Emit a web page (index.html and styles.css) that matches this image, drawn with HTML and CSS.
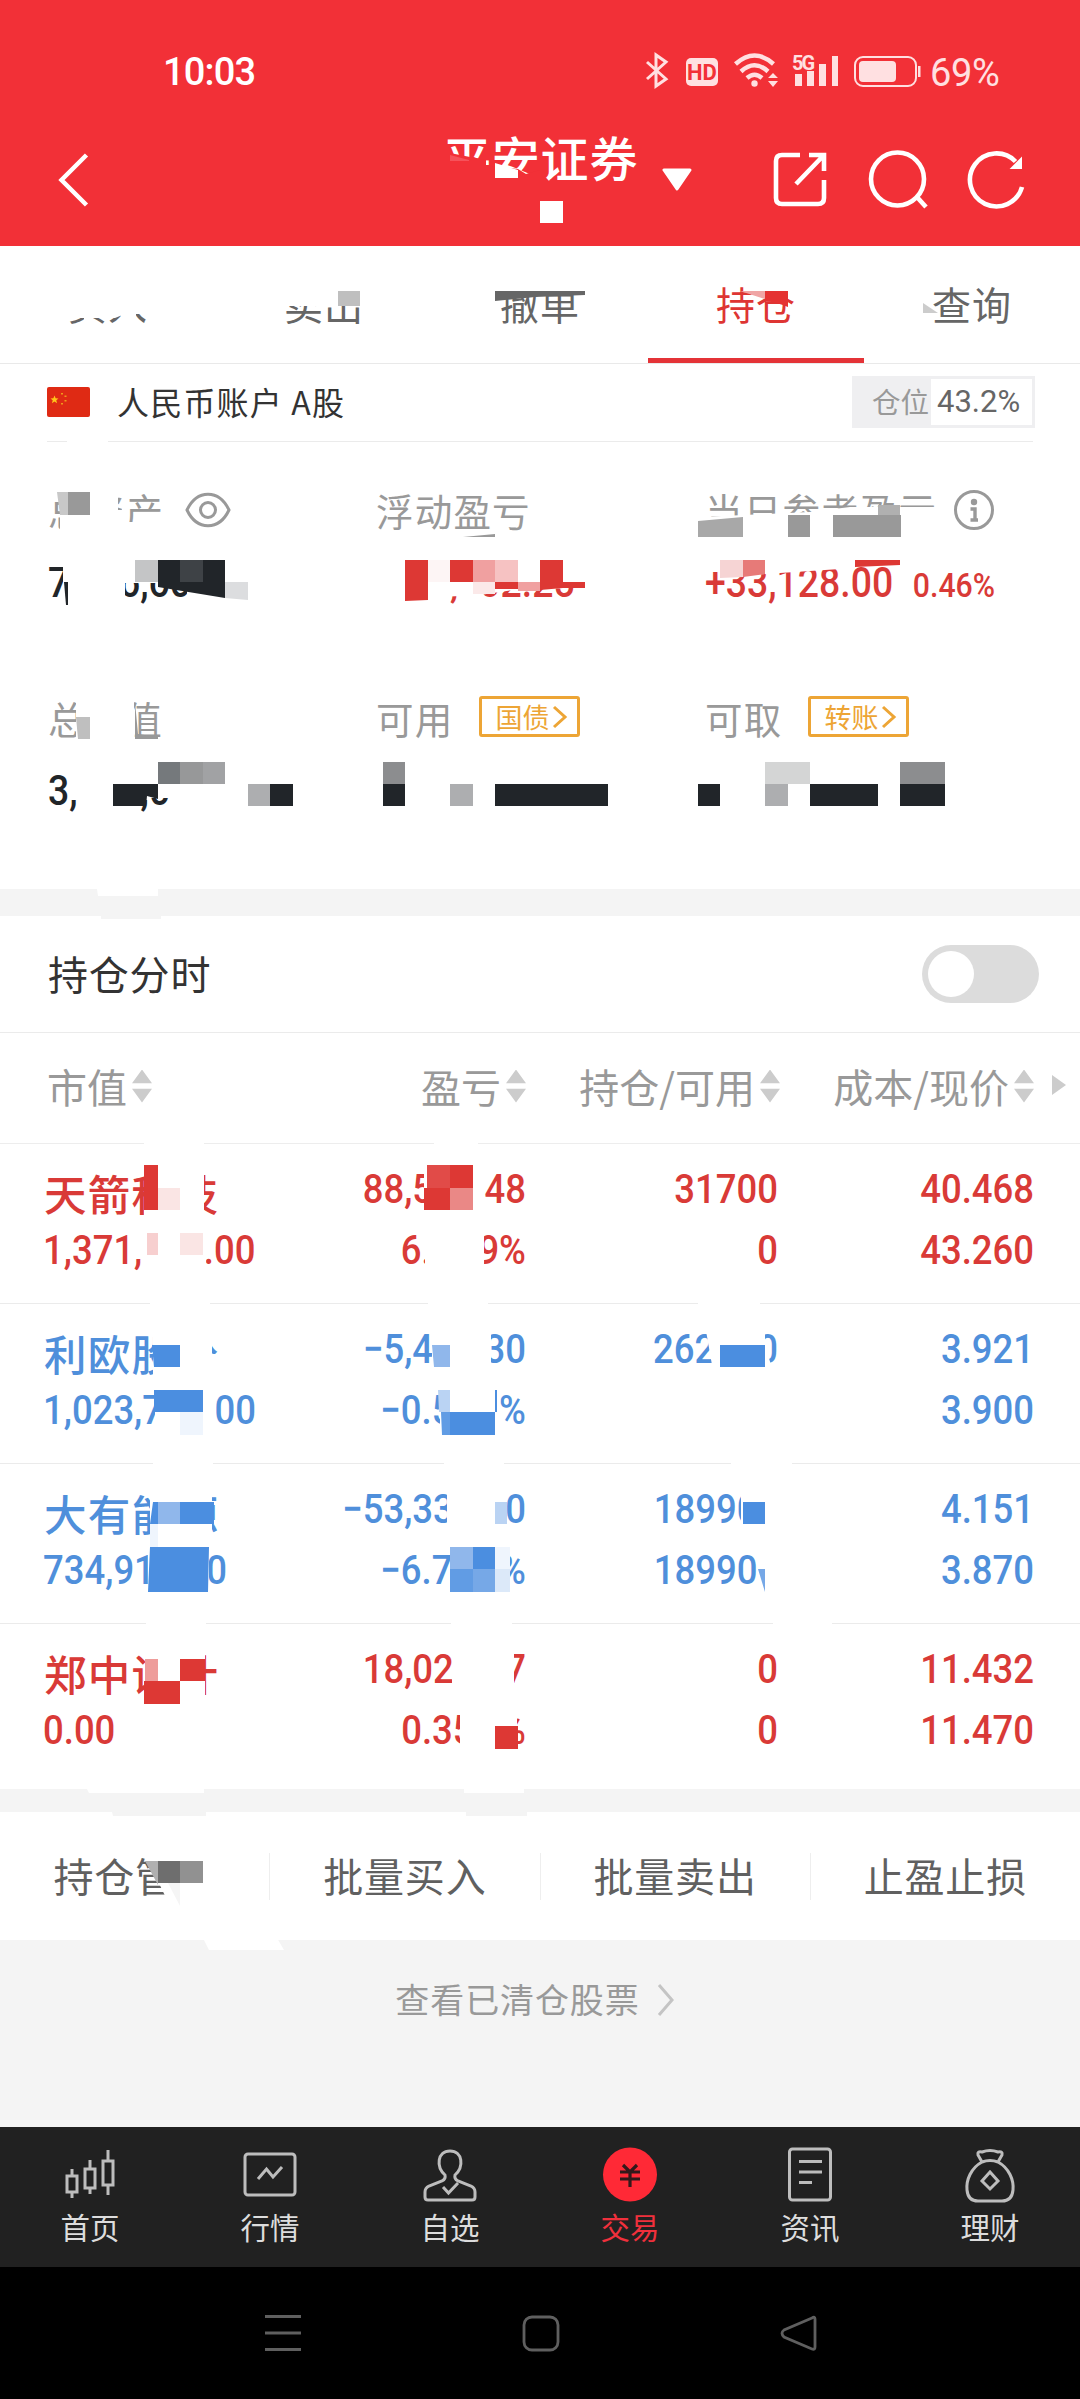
FILE: index.html
```html
<!DOCTYPE html>
<html lang="zh-CN">
<head>
    <meta charset="utf-8">
    <meta name="viewport" content="width=device-width, initial-scale=1.0">
    <link rel="stylesheet" href="styles.css">
    <title>持仓</title>
</head>

<body>
    <div class="header">
        <div class="status">
            <span class="time">10:03</span>
            <svg class="statusIcons" width="284" height="44" viewBox="640 48 284 44">
                <path d="M647 62 L666 79 L656 86 V55 L666 62 L647 79" fill="none" stroke="#ffe0e1" stroke-width="3" />
                <rect x="686" y="58" width="32" height="28" rx="5" fill="#ffe0e1" />
                <text x="702" y="80" text-anchor="middle" class="hd">HD</text>
                <g fill="none" stroke="#ffe0e1" stroke-width="4.500">
                    <path d="M735.500 64 Q754.500 47 773.500 64" />
                    <path d="M741 71.500 Q754.500 59 768 71.500" />
                    <path d="M747 78 Q754.500 71.500 762 78" />
                </g>
                <circle cx="754.500" cy="83.500" r="3.200" fill="#ffe0e1" />
                <path d="M773 73 l5 5 h-10z M768 81 h10 l-5 6z" fill="#ffe0e1" />
                <text x="792" y="69.500" class="net">5G</text>
                <path d="M795 74h7v12h-7z M807 71h7v15h-7z M819 64h7v22h-7z M832 56h6v30h-6z" fill="#ffe0e1" />
                <rect x="855" y="57" width="61" height="29" rx="8" fill="none" stroke="#ffe0e1" stroke-width="2" />
                <rect x="859" y="61" width="37" height="21" rx="4" fill="#ffe0e1" />
                <rect x="918" y="66" width="2.500" height="11" fill="#ffe0e1" />
            </svg>
            <span class="battery">69%</span>
        </div>
        <div class="titleBar">
            <svg class="back" width="40" height="60" viewBox="0 0 40 60"><path d="M31.500 5 L6.500 30 L31.500 55" fill="none" stroke="#fff" stroke-width="4.500" /></svg>
            <h1>平安证券</h1>
            <svg class="caret" width="30" height="24" viewBox="0 0 30 24"><path d="M2 2 H28 L15 21z" fill="#fff" stroke="#fff" stroke-width="3" stroke-linejoin="round" /></svg>
            <svg class="tools" width="256" height="64" viewBox="770 148 256 64" fill="none" stroke="#fff" stroke-width="4.600">
                <path d="M800 155 H782 Q776 155 776 161 V198 Q776 204 782 204 H818 Q824 204 824 198 V180" />
                <path d="M809 155 H824 V171 M823 156 L796 184" />
                <circle cx="897.500" cy="179" r="26.500" />
                <path d="M916 196 L926 207" />
                <path d="M1015.500 161.500 A26.500 26.500 0 1 0 1022 187" />
                <path d="M1021 159 V168 H1012z" fill="#fff" stroke-width="2" />
            </svg>
        </div>
    </div>

    <div class="tabs">
        <a>买入</a>
        <a>卖出</a>
        <a>撤单</a>
        <a class="active">持仓</a>
        <a>查询</a>
    </div>

    <div class="account">
        <svg width="43" height="30" viewBox="0 0 43 30">
            <rect width="43" height="30" rx="2" fill="#df2a14" />
            <path d="M7.500 8.500l1.100 2.700 2.900.2-2.200 1.900.7 2.900-2.500-1.600-2.500 1.600.7-2.900-2.200-1.900 2.900-.2z" fill="#ffc61a" />
            <path d="M14 6h2v1.500h-2z M17.500 8.500h2v1.500h-2z M17.500 13h2v1.500h-2z M14 16h2v1.500h-2z" fill="#f09a1a" />
        </svg>
        <span class="accountName">人民币账户 A股</span>
        <div class="position"><span>仓位</span><b>43.2%</b></div>
    </div>

    <div class="summary">
        <div class="item">
            <div class="label">总资产
                <svg class="eye" width="46" height="36" viewBox="0 0 46 36" fill="none" stroke="#999" stroke-width="3"><path d="M2 18 C12 -3 34 -3 44 18 C34 39 12 39 2 18z" /><circle cx="23" cy="18" r="7.500" /></svg>
            </div>
            <div class="value">7<i class="gap gap-2c"></i>6,60</div>
        </div>
        <div class="item">
            <div class="label">浮动盈亏</div>
            <div class="value red profit">,<i class="gap gap-1"></i>02.25</div>
        </div>
        <div class="item">
            <div class="label">当日参考盈亏
                <svg class="info" width="40" height="42" viewBox="0 0 40 42" fill="none" stroke="#999" stroke-width="3"><circle cx="20" cy="21" r="18.500" /><circle cx="20" cy="13" r="3.200" fill="#999" stroke="none" /><path d="M16.500 20 H21 V31 M16.500 31 H24" stroke-width="3.400" /></svg>
            </div>
            <div class="value red">+33,128.00<small>0.46%</small></div>
        </div>
        <div class="item">
            <div class="label">总<i class="gap gap-w"></i>值</div>
            <div class="value">3,<i class="gap gap-3"></i>,0</div>
        </div>
        <div class="item">
            <div class="label">可用
                <span class="tag">国债<svg width="16" height="24" viewBox="0 0 16 24"><path d="M2 2 L13 12 L2 22" fill="none" stroke="#eda535" stroke-width="3" /></svg></span>
            </div>
        </div>
        <div class="item">
            <div class="label">可取
                <span class="tag">转账<svg width="16" height="24" viewBox="0 0 16 24"><path d="M2 2 L13 12 L2 22" fill="none" stroke="#eda535" stroke-width="3" /></svg></span>
            </div>
        </div>
    </div>

    <div class="band"></div>

    <div class="switchRow">
        <span>持仓分时</span>
        <div class="switch"><i></i></div>
    </div>

    <div class="tableHead">
        <div class="c1"><span>市值</span><i class="sort"></i></div>
        <div class="c2"><span>盈亏</span><i class="sort"></i></div>
        <div class="c3"><span>持仓/可用</span><i class="sort"></i></div>
        <div class="c4"><span>成本/现价</span><i class="sort"></i></div>
        <i class="more"></i>
    </div>

    <div class="stock red">
        <div class="c1"><b>天箭科技</b><span>1,371,<i class="gap gap-3"></i>.00</span></div>
        <div class="c2"><span>88,5<i class="gap gap-2d"></i>48</span><span>6.<i class="gap gap-2p"></i>9%</span></div>
        <div class="c3"><span>31700</span><span>0</span></div>
        <div class="c4"><span>40.468</span><span>43.260</span></div>
    </div>
    <div class="stock blue">
        <div class="c1"><b>利欧股份</b><span>1,023,7<i class="gap gap-2d"></i>00</span></div>
        <div class="c2"><span>−5,4<i class="gap gap-2d"></i>30</span><span>−0.5<i class="gap gap-2p"></i>%</span></div>
        <div class="c3"><span>262<i class="gap gap-2"></i>0</span></div>
        <div class="c4"><span>3.921</span><span>3.900</span></div>
    </div>
    <div class="stock blue">
        <div class="c1"><b>大有能源</b><span>734,91<i class="gap gap-2d"></i>0</span></div>
        <div class="c2"><span>−53,33<i class="gap gap-2d"></i>0</span><span>−6.7<i class="gap gap-2p"></i>%</span></div>
        <div class="c3"><span>18990<i class="gap gap-1"></i></span><span>18990<i class="gap gap-1"></i></span></div>
        <div class="c4"><span>4.151</span><span>3.870</span></div>
    </div>
    <div class="stock red last">
        <div class="c1"><b>郑中设计</b><span>0.00</span></div>
        <div class="c2"><span>18,02<i class="gap gap-2d"></i>7</span><span>0.35<i class="gap gap-1p"></i>%</span></div>
        <div class="c3"><span>0</span><span>0</span></div>
        <div class="c4"><span>11.432</span><span>11.470</span></div>
    </div>

    <div class="band thin"></div>

    <div class="actions">
        <a>持仓管<i class="gap gap-w"></i></a>
        <a>批量买入</a>
        <a>批量卖出</a>
        <a>止盈止损</a>
    </div>

    <div class="cleared">
        查看已清仓股票
        <svg width="18" height="34" viewBox="0 0 18 34"><path d="M2 2 L15 17 L2 32" fill="none" stroke="#c4c4c4" stroke-width="3" /></svg>
    </div>

    <div class="menu">
        <a>
            <svg viewBox="0 0 60 60"><path d="M7 32h10v16H7z M12 25v7 M12 48v6 M25 25h10v19H25z M30 16v9 M30 44v6 M43 17h10v24H43z M48 6v11 M48 41v10" /></svg>
            <span>首页</span>
        </a>
        <a>
            <svg viewBox="0 0 60 60"><rect x="5" y="10" width="50" height="41" rx="3" /><path d="M18 35 L26.500 25 L33 33 L42 23" /></svg>
            <span>行情</span>
        </a>
        <a>
            <svg viewBox="0 0 60 60"><path d="M25 31 C16 23 17 7 30 7 C43 7 44 23 35 31 Q34 35 38 37 L51 42 Q55 44 55 48 V53 Q55 56 52 56 H8 Q5 56 5 53 V48 Q5 44 9 42 L22 37 Q26 35 25 31z M23 43 L28.500 49 L38 39" /></svg>
            <span>自选</span>
        </a>
        <a class="active">
            <svg viewBox="0 0 60 60"><circle cx="30" cy="30.500" r="27" fill="#ff2936" stroke="none" /><path d="M23 21 L30 28 L37 21 M20 28 H40 M20 35 H40 M30 28 V43" stroke="#33191b" stroke-width="3.200" /></svg>
            <span>交易</span>
        </a>
        <a>
            <svg viewBox="0 0 60 60"><rect x="9.500" y="5" width="41" height="51" rx="3" /><path d="M19 17.500 H42 M19 28 H42 M19 38.500 H32" /></svg>
            <span>资讯</span>
        </a>
        <a>
            <svg viewBox="0 0 60 60"><path d="M22 18 L18 11 Q17 7 22 8 Q30 5 38 8 Q43 7 42 11 L38 18 C49 24 54 36 53 46 Q52 57 42 57 H18 Q8 57 7 46 C6 36 11 24 22 18 Q30 15 38 18 M30 28 L38 37 L30 45 L22 37z" /></svg>
            <span>理财</span>
        </a>
    </div>

    <div class="navBar">
        <svg width="1080" height="132" viewBox="0 0 1080 132" fill="none" stroke="#5f5f5f" stroke-width="2.800">
            <path d="M265 49.500 H301 M265 66 H301 M265 82.500 H301" />
            <rect x="524" y="50" width="34" height="33" rx="8" />
            <path d="M812 51 L784 63 Q780 66 784 70 L812 82 Q815 83 815 80 V52 Q815 49 812 51z" />
        </svg>
    </div>

    <!-- mosaic that hides the private figures -->
    <svg class="mosaic" width="1080" height="2399" viewBox="0 0 1080 2399">
        <!-- title -->
        <g fill="#f23037">
            <path d="M444 153 L450 153 L470 157 L486 160 V190 H444z" />
            <path d="M492 166 L518 169 L526 174 L540 170 V186 H492z" />
        </g>
        <path d="M450 155 L469 160 V161 H450z" fill="#f6525a" />
        <g fill="#fff">
            <path d="M495 163 L518 170 V178 H495z M540 201h23v22h-23z" />
            <!-- tabs -->
            <path d="M60 270 H160 V314 H125 L115 318 H60z M84 310h9v16h-9z M121 312h15v16h-15z" />
            <path d="M280 270h90v36h-90z M490 270h98v21h-98z M757 270h40v21h-40z" />
        </g>
        <path d="M338 291h22v15h-22z" fill="#bfbfbf" />
        <path d="M495 291 H585 V295 L535 297 L495 301z" fill="#666" />
        <path d="M740 291 H765 V299z" fill="#f0a5a5" />
        <path d="M765 291 H788 V307 Q776 302 765 301z" fill="#e53232" />
        <path d="M923 303 L938 313 H923z" fill="#ccc" />

        <g fill="#fff">
            <path d="M67 438h41v6h-41z" />
            <!-- summary labels -->
            <path d="M46 488h22v10h-22z M60 488h58v45h-58z M122 488h7v45h-7z M122 522h45v12h-45z M118 510h10v20h-10z" />
            <path d="M698 517 L745 515 L788 513 L810 512 L850 507 L940 507 V537 H698z" />
            <path d="M76 696h58v45h-58z" />
            <!-- summary values -->
            <path d="M63 558h62v50h-62z M125 558h125v25h-125z M187 588h70v20h-70z" />
            <path d="M440 555 H590 V587 L520 589 L480 595 L440 597z" />
            <path d="M720 555 H855 V568 L810 571 L765 574 L720 578z" />
            <path d="M135 766h50v32h-50z M155 762h40v36h-40z" />
        </g>
        <path d="M57 492 H68 V515 H60z" fill="#c8c8c8" />
        <path d="M68 492h22v23h-22z" fill="#999" />
        <path d="M463 537 L495 534 V537z" fill="#999" />
        <path d="M698 521 L743 517 V537 H698z" fill="#a8a8a8" />
        <path d="M788 515h22v22h-22z M833 515h68v22h-68z" fill="#999" />
        <path d="M878 505h22v10h-22z" fill="#b0b0b0" />
        <path d="M64 582 H68 V605 H66z" fill="#212529" />
        <path d="M135 560h23v22h-23z" fill="#c4c5c6" />
        <path d="M158 560 H225 V598 L158 587z" fill="#212529" />
        <path d="M180 560h23v22h-23z" fill="#3e4246" />
        <path d="M225 582 H248 V600 L225 598z" fill="#dcdddf" />
        <path d="M405 560 H428 V600 L405 601z M450 560h23v22h-23z M495 582h23v7h-23z M540 560h23v22h22v6h-22l-23 2z" fill="#dd3834" />
        <path d="M428 560h22v22h-22z" fill="#fdf5f5" />
        <path d="M473 560h22v22h-22z M518 582h22v9h-22z" fill="#f0a0a0" />
        <path d="M495 560h23v22h-23z" fill="#f6c2c2" />
        <path d="M473 582h22v12h-22z" fill="#fbe9e9" />
        <path d="M720 560 H743 V577 L720 578z" fill="#f6d4d4" />
        <path d="M743 560 H765 V574 L743 577z" fill="#e77a78" />
        <path d="M855 560 H900 V565 L855 567z" fill="#dd3834" />
        <path d="M76 717 H90 V739 H78z" fill="#bfbfbf" />
        <path d="M135 702 L138 734 L158 737 V739 H135z" fill="#999" />
        <path d="M158 762h22v22h-22z" fill="#75797c" />
        <path d="M180 762h23v22h-23z" fill="#979899" />
        <path d="M203 762h22v22h-22z" fill="#a1a2a4" />
        <path d="M113 784 H158 V799 L147 796 L146 806 H113z M270 784h23v22h-23z M383 784h22v22h-22z M495 784h113v22h-113z M698 784h22v22h-22z M810 784h68v22h-68z M900 784h45v22h-45z" fill="#212529" />
        <path d="M248 784h22v22h-22z M450 784h23v22h-23z M765 784h23v22h-23z" fill="#adaeb0" />
        <path d="M383 762h22v22h-22z M900 762h45v22h-45z" fill="#8c8d8f" />
        <path d="M765 762h45v22h-45z" fill="#d4d5d5" />

        <!-- separators cut by the mosaic -->
        <path d="M97 889 H158 V896 H98z" fill="#fff" />
        <path d="M101 916h60v3h-60z" fill="#f4f4f4" />
        <g fill="#fff">
            <path d="M144 1141h60v5h-60z M434 1141h44v5h-44z" />
            <path d="M150 1301h60v5h-60z M428 1301h60v5h-60z M698 1301h62v5h-62z" />
            <path d="M153 1461h60v5h-60z M444 1461h60v5h-60z M731 1461h61v5h-61z" />
            <path d="M146 1622h60v5h-60z M451 1622h61v5h-61z M773 1622h59v5h-59z" />
            <!-- row 1 -->
            <path d="M144 1165h60v60h-60z M148 1230h58v42h-58z M424 1165h59v50h-59z M425 1228h59v45h-59z" />
            <!-- row 2 -->
            <path d="M153 1325h59v56h-59z M212 1325h8v20h-8z M212 1354h8v26h-8z M155 1388h61v47h-61z" />
            <path d="M432 1325h59v50h-59z M440 1388h55v47h-55z M705 1325 L712 1365 H771 L765 1345 V1325z" />
            <!-- row 3 -->
            <path d="M150 1487h62v55h-62z M148 1547h61v45h-61z M447 1487h59v45h-59z M450 1547h60v45h-60z M741 1487h26v45h-26z" />
            <!-- row 4 -->
            <path d="M145 1648h60v56h-60z M452 1648h62v45h-62z M460 1708h57v45h-57z" />
        </g>
        <g fill="#dd3834">
            <path d="M144 1165h14v45h-14z M424 1188h26v22h-26z M450 1165h23v23h-23z" />
            <path d="M180 1659h25v22h-25z M144 1681h36v23h-36z M495 1726h23v23h-23z" />
        </g>
        <path d="M158 1188h22v22h-22z M180 1233h23v22h-23z" fill="#fae5e4" />
        <path d="M147 1233h11v22h-11z" fill="#f7cfcf" />
        <path d="M427 1165h23v23h-23z" fill="#e14b48" />
        <path d="M450 1188h23v22h-23z" fill="#ea8886" />
        <path d="M145 1659h13v22h-13z" fill="#ee9c9a" />
        <g fill="#4b8ee0">
            <path d="M152 1345 H180 V1367 H154z M154 1390h49v22h-49z M450 1412h45v23h-45z M495 1390h2v22h-2z M720 1345h45v22h-45z" />
            <path d="M153 1502 H214 V1524 H150z M150 1547 H209 L208 1592 H148z M473 1547h22v22h-22z M743 1502h22v22h-22z" />
        </g>
        <path d="M432 1345 H450 V1367 H434z M158 1502h22v22h-22z M450 1547h23v22h-23z" fill="#90b7eb" />
        <path d="M438 1390h12v22h-11z M495 1502h12v22h-12z" fill="#bad3f3" />
        <path d="M441 1412h9v23h-8z M450 1569h23v23h-23z" fill="#619ce4" />
        <path d="M473 1569h22v23h-22z M758 1569h7v23z" fill="#76a8e7" />
        <path d="M180 1412h23v23h-23z M150 1524h8v23h-8z M495 1547h15v22h-15z" fill="#eff5fd" />
        <path d="M495 1569h15v23h-15z" fill="#dce9f9" />

        <!-- bottom buttons -->
        <path d="M87 1789 H204 V1793 H89z M464 1789h60v4h-60z" fill="#fff" />
        <path d="M112 1812h94v4h-93z M466 1812h61v4h-61z" fill="#f4f4f4" />
        <path d="M144 1852 L168 1902 H215 V1852z" fill="#fff" />
        <path d="M145 1861 H158 V1885z" fill="#b0b0b0" />
        <path d="M158 1861h22v22h-22z" fill="#6e6e6e" />
        <path d="M180 1861h23v22h-23z" fill="#919191" />
        <path d="M168 1883 H180 V1906z" fill="#f5f5f5" />
        <path d="M203 1938 H277 L284 1950 H209z" fill="#fff" />
    </svg>
</body>
</html>
```
FILE: styles.css
```css
* {
    box-sizing: border-box;
}

html {
    font-family: "Noto Sans CJK SC", sans-serif;
}

body {
    position: relative;
    width: 1080px;
    height: 2399px;
    margin: 0;
    overflow: hidden;
    background-color: #ffffff;
}

i {
    font-style: normal;
}

svg {
    display: block;
}

.red {
    color: #d93a37;
}

.blue {
    color: #4f8fdb;
}

/* blanks that are left in the hidden figures */
.gap {
    display: inline-block;
}

.gap-1 {
    width: 0.5615em;
}

.gap-1p {
    width: 0.7em;
}

.gap-2 {
    width: 1.15em;
}

.gap-2p {
    width: 1.28em;
}

.gap-2c {
    width: 1.33em;
}

.gap-2d {
    width: 1.41em;
}

.gap-3 {
    width: 1.6845em;
}

.gap-w {
    width: 1em;
}

.header {
    height: 246px;
    background-color: #f23037;
    color: #ffffff;
}

.status {
    display: flex;
    height: 92px;
    padding: 48px 0 0 163px;
    font-family: Roboto, sans-serif;
    line-height: 48px;
}

.time {
    width: 477px;
    font-size: 38px;
    font-weight: 500;
    letter-spacing: -0.8px;
}

.battery {
    margin-left: 6px;
    font-size: 38px;
    line-height: 50px;
    letter-spacing: -0.3px;
    color: #ffe0e1;
}

.hd {
    font: 700 22px Roboto, sans-serif;
    fill: #f23037;
}

.net {
    font: 700 20px Roboto, sans-serif;
    letter-spacing: -2px;
    fill: #ffe0e1;
}

.titleBar {
    display: flex;
    align-items: flex-start;
    height: 154px;
    padding-left: 55px;
}

.back {
    margin-top: 58px;
}

.titleBar h1 {
    width: 202px;
    margin: 40px 0 0 348px;
    font-size: 48px;
    font-weight: 500;
    line-height: 48px;
    letter-spacing: 0.8px;
    white-space: nowrap;
}

.caret {
    margin: 76px 0 0 17px;
}

.tools {
    margin: 56px 0 0 78px;
}

.tabs {
    display: flex;
    height: 118px;
    border-bottom: 1px solid #e9e9e9;
}

.tabs a {
    flex: 1;
    border-bottom: 5px solid transparent;
    font-size: 39px;
    line-height: 114px;
    letter-spacing: 1px;
    text-align: center;
    color: #666666;
}

.tabs a.active {
    border-color: #e43337;
    color: #de3533;
}

.account {
    display: flex;
    height: 78px;
    margin: 0 47px;
    border-bottom: 1px solid #ebebeb;
}

.account > svg {
    margin-top: 23px;
}

.accountName {
    flex: 1;
    margin-left: 27px;
    font-size: 32px;
    line-height: 75px;
    letter-spacing: 1.2px;
    color: #333333;
}

.position {
    display: flex;
    width: 183px;
    height: 52px;
    margin: 12px -2px 0 0;
    padding: 3px;
    background-color: #efeff1;
    line-height: 45px;
}

.position span {
    width: 76px;
    padding-left: 17px;
    font-size: 28.5px;
    line-height: 43px;
    color: #999999;
}

.position b {
    flex: 1;
    padding-left: 6px;
    background-color: #ffffff;
    font-family: Roboto, sans-serif;
    font-size: 31px;
    font-weight: 400;
    color: #666666;
}

.summary {
    display: grid;
    grid-template-columns: 328px 329px 375px;
    grid-template-rows: 208px 239px;
    padding-left: 48px;
}

.label {
    display: flex;
    align-items: center;
    height: 56px;
    margin-top: 39px;
    font-size: 37.5px;
    letter-spacing: 1.2px;
    white-space: nowrap;
    color: #999999;
}

.eye {
    margin: 2px 0 0 21px;
}

.info {
    margin: 2px 0 0 17px;
}

.value {
    display: inline-block;
    margin-top: 22px;
    font-family: Roboto, sans-serif;
    font-size: 42px;
    font-weight: 500;
    line-height: 48px;
    white-space: nowrap;
    transform: scaleX(0.89);
    transform-origin: left;
    color: #212529;
}

.value.red {
    color: #d93a37;
}

.profit {
    margin-left: 74px;
}

.value small {
    margin-left: 22px;
    font-size: 34px;
}

.tag {
    display: flex;
    align-items: center;
    height: 41px;
    margin: 0 0 1px 26px;
    padding: 0 9px 0 13px;
    border: 3px solid #eda535;
    border-radius: 3px;
    font-size: 27px;
    letter-spacing: 0;
    color: #eda535;
}

.tag svg {
    margin-left: 3px;
}

.band {
    height: 27px;
    background-color: #f4f4f4;
}

.thin {
    height: 23px;
}

.switchRow {
    display: flex;
    justify-content: space-between;
    height: 117px;
    padding: 29px 41px 0 48px;
    border-bottom: 1px solid #ebebeb;
    font-size: 40px;
    line-height: 57px;
    letter-spacing: 0.8px;
    color: #333333;
}

.switch {
    width: 117px;
    height: 58px;
    padding: 6px;
    border-radius: 29px;
    background-color: #dcdcdc;
}

.switch i {
    display: block;
    width: 46px;
    height: 46px;
    border-radius: 50%;
    background-color: #ffffff;
}

.tableHead {
    display: flex;
    height: 111px;
    border-bottom: 1px solid #ededed;
    font-size: 40px;
    line-height: 108px;
    color: #999999;
}

.tableHead div {
    display: flex;
    align-items: center;
}

.tableHead span {
    margin-top: -5px;
}

.c1 {
    width: 300px;
    padding-left: 47px;
}

.c2 {
    width: 226px;
}

.c3 {
    width: 254px;
}

.c4 {
    width: 254px;
}

.tableHead .c2,
.tableHead .c3,
.tableHead .c4 {
    justify-content: flex-end;
}

.sort {
    width: 20px;
    height: 33px;
    margin: -4px 0 0 5px;
    background-color: #cccccc;
    clip-path: polygon(50% 0, 100% 42%, 0 42%, 50% 0, 50% 100%, 0 58%, 100% 58%, 50% 100%);
}

.more {
    width: 14px;
    height: 20px;
    margin: 42px 0 0 18px;
    background-color: #cccccc;
    clip-path: polygon(0 0, 100% 50%, 0 100%);
}

.stock {
    display: flex;
    height: 160px;
    border-bottom: 1px solid #ebebeb;
}

.stock.last {
    height: 165px;
    border: 0;
}

.stock b {
    display: block;
    height: 77px;
    margin-left: -3px;
    padding-top: 21px;
    font-size: 42.5px;
    font-weight: 500;
    line-height: 56px;
    letter-spacing: 1.3px;
}

.stock span {
    display: block;
    font-family: Roboto, sans-serif;
    font-size: 41px;
    font-weight: 500;
    line-height: 61px;
    white-space: nowrap;
    transform: scaleX(0.89);
    transform-origin: right;
}

.stock .c1 span {
    margin: -1px 0 0 -4px;
    transform-origin: left;
}

.stock .c2,
.stock .c3,
.stock .c4 {
    padding-top: 15px;
    text-align: right;
}

.stock .c3 {
    padding-right: 2px;
}

.actions {
    display: flex;
    align-items: center;
    height: 128px;
}

.actions a {
    flex: 1;
    height: 47px;
    border-left: 1px solid #eeeeee;
    font-size: 40px;
    line-height: 45px;
    letter-spacing: 0.8px;
    text-align: center;
    color: #606060;
}

.actions a:first-child {
    border: 0;
}

.cleared {
    display: flex;
    justify-content: center;
    height: 187px;
    padding-right: 10px;
    background-color: #f4f4f4;
    font-size: 34px;
    line-height: 117px;
    letter-spacing: 0.9px;
    color: #999999;
}

.cleared svg {
    margin: 43px 0 0 17px;
}

.menu {
    display: flex;
    height: 140px;
    background-color: #212121;
}

.menu a {
    flex: 1;
    padding-top: 17px;
    font-size: 29.5px;
    text-align: center;
    color: #dddddd;
}

.menu svg {
    width: 60px;
    height: 60px;
    margin: 0 auto;
    fill: none;
    stroke: #bdbdbd;
    stroke-width: 3;
}

.menu span {
    display: block;
    line-height: 44px;
}

.menu .active {
    color: #f0303c;
}

.navBar {
    height: 132px;
    background-color: #000000;
}

.mosaic {
    position: absolute;
    top: 0;
    left: 0;
}
```
